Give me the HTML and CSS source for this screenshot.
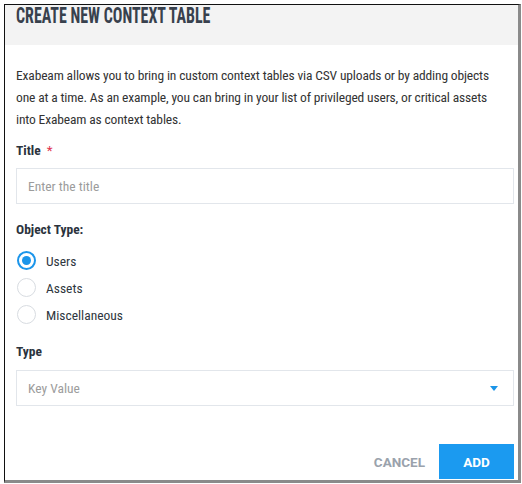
FILE: index.html
```html
<!DOCTYPE html>
<html>
<head>
<meta charset="utf-8">
<link rel="stylesheet" href="styles.css">
</head>
<body>
<div class="dialog">
  <div class="header"><h1 class="title">CREATE NEW CONTEXT TABLE</h1></div>
  <div class="body">
    <p class="intro">Exabeam allows you to bring in custom context tables via CSV uploads or by adding objects one at a time. As an example, you can bring in your list of privileged users, or critical assets into Exabeam as context tables.</p>
    <div class="label label-title">Title <span class="req">*</span></div>
    <div class="field"><span class="placeholder">Enter the title</span></div>
    <div class="label label-obj">Object Type:</div>
    <div class="radios">
      <div class="radio-row"><span class="radio checked"></span><span class="radio-label">Users</span></div>
      <div class="radio-row"><span class="radio"></span><span class="radio-label">Assets</span></div>
      <div class="radio-row"><span class="radio"></span><span class="radio-label">Miscellaneous</span></div>
    </div>
    <div class="label label-type">Type</div>
    <div class="field select"><span class="placeholder">Key Value</span><span class="caret"></span></div>
    <div class="actions">
      <button class="btn btn-cancel">CANCEL</button>
      <button class="btn btn-add">ADD</button>
    </div>
  </div>
</div>
</body>
</html>
```
FILE: styles.css
```css
* { box-sizing: border-box; }
html, body { margin: 0; padding: 0; background: #fff; }
body { font-family: "Roboto Condensed", Lato, sans-serif; color: #333; }
.dialog {
  margin: 4px 0 0 4px;
  width: 517px;
  height: 479px;
  border-left: 1px solid #111;
  border-top: 1px solid #111;
  border-right: 3px solid #8a8a8a;
  border-bottom: 3px solid #8a8a8a;
  display: flex;
  flex-direction: column;
  overflow: hidden;
}
.header {
  height: 40px;
  background: #f3f3f3;
  padding-left: 11px;
}
.title {
  display: inline-block;
  margin: 0;
  font-family: "Roboto Condensed", sans-serif;
  font-weight: 700;
  font-size: 22px;
  line-height: 22px;
  color: #38414d;
  transform: scaleX(0.725);
  transform-origin: left center;
  white-space: nowrap;
}
.body {
  flex: 1;
  padding: 19px 4px 0 11px;
  display: flex;
  flex-direction: column;
}
.intro {
  margin: 0;
  padding-right: 8px;
  font-size: 13.5px;
  letter-spacing: -0.15px;
  line-height: 22px;
  color: #333;
}
.label {
  font-size: 13.5px;
  font-weight: 700;
  line-height: 20px;
  color: #2b333d;
}
.label-title { margin-top: 10px; }
.label-obj { margin-top: 15px; }
.label-type { margin-top: 13px; }
.req { color: #e0334f; font-weight: 400; margin-left: 3px; }
.field {
  margin-top: 8px;
  height: 36px;
  border: 1px solid #e2e6eb;
  display: flex;
  align-items: center;
  padding-left: 11px;
  padding-right: 15px;
}
.select { margin-top: 9px; justify-content: space-between; }
.placeholder { font-size: 13.5px; color: #9c9c9c; }
.caret {
  width: 0; height: 0;
  border-left: 4px solid transparent;
  border-right: 4px solid transparent;
  border-top: 5px solid #1b95e8;
}
.radios { margin-top: 8px; display: flex; flex-direction: column; }
.radio-row { height: 27px; display: flex; align-items: center; }
.radio {
  width: 19px; height: 19px;
  border-radius: 50%;
  border: 1.5px solid #d8dce1;
  margin-left: 1px;
  margin-right: 10px;
  display: flex; align-items: center; justify-content: center;
}
.radio.checked { border: 2px solid #1b95ea; }
.radio.checked::after {
  content: "";
  width: 9px; height: 9px; border-radius: 50%;
  background: #1b95ea;
}
.radio-label { font-size: 13.5px; color: #2f3740; }
.actions {
  margin-top: auto;
  display: flex;
  justify-content: flex-end;
  align-items: center;
  padding-bottom: 1px;
}
.btn {
  font-family: Roboto, "Liberation Sans", sans-serif;
  font-weight: 700;
  font-size: 13.5px;
  border: none;
  cursor: pointer;
  height: 35px;
}
.btn-cancel {
  background: transparent;
  color: #9aa2ac;
  padding: 0;
  margin-right: 14px;
}
.btn-add {
  background: #1b9af0;
  color: #fff;
  width: 75px;
}
```
